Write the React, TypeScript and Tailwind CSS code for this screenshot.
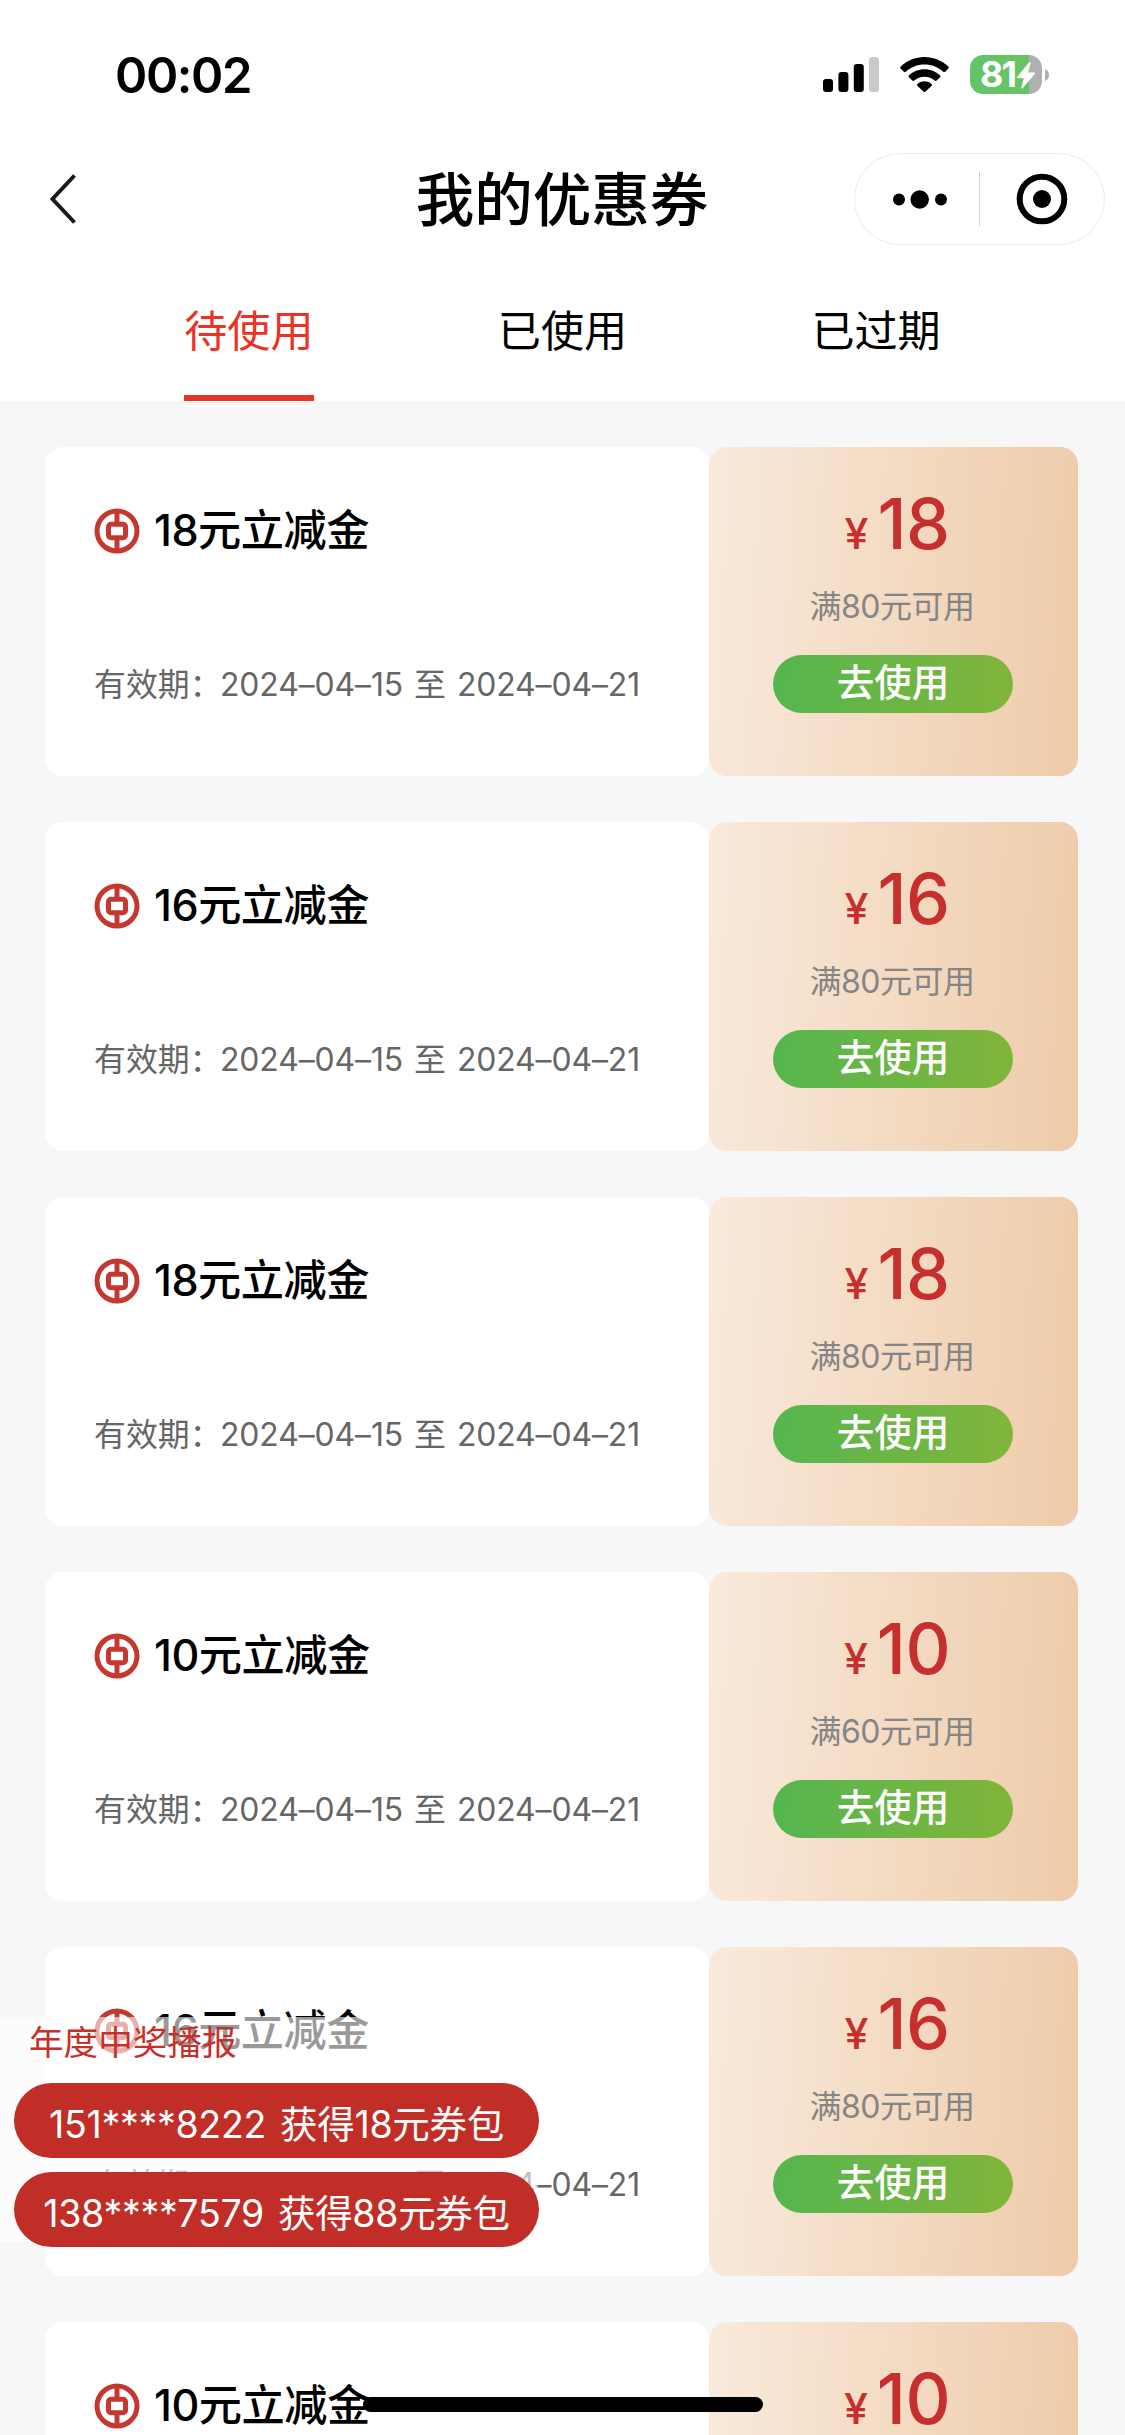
const coupons = [
  { amount: 18, min: 80 },
  { amount: 16, min: 80 },
  { amount: 18, min: 80 },
  { amount: 10, min: 60 },
  { amount: 16, min: 80 },
  { amount: 10, min: 60 },
];

const winners = [
  { phone: "151****8222", prize: "获得18元券包" },
  { phone: "138****7579", prize: "获得88元券包" },
];

function StatusBar() {
  return (
    <div className="flex h-[150px] items-start justify-between pl-[115px] pr-[76px]">
      <div className="mt-[46px] w-[160px] text-[49px] font-semibold leading-[60px] tracking-[-1.400px] text-black">00:02</div>
      <div className="mt-[55px] flex items-start">
        <svg className="mt-[2px]" width="56" height="35" viewBox="0 0 56 35">
          <rect x="0" y="22" width="10" height="13" rx="3" />
          <rect x="15.4" y="15" width="10" height="20" rx="3" />
          <rect x="30.8" y="7" width="10" height="28" rx="3" />
          <rect x="46" y="0" width="10" height="35" rx="3" fill="#c9c9c9" />
        </svg>
        <svg className="ml-[21px] mt-[2px]" width="49" height="35" viewBox="0 0 49 35">
          <path d="M24.5 0C15.3 0 6.900 3.600.7 9.500c-.6.600-.6 1.400-.1 2l3.200 3.300c.6.600 1.500.6 2.100 0C10.700 10.300 17.200 7.600 24.500 7.600s13.800 2.700 18.600 7.200c.6.600 1.500.6 2.100 0l3.200-3.300c.5-.6.5-1.400-.1-2C42.100 3.600 33.700 0 24.500 0z" />
          <path d="M24.500 12.200c-6 0-11.400 2.300-15.500 6-.6.600-.6 1.500 0 2.100l3.300 3.300c.5.500 1.400.500 2 0 2.700-2.400 6.300-3.800 10.200-3.800s7.500 1.400 10.200 3.800c.6.500 1.500.5 2 0l3.300-3.300c.6-.6.600-1.500 0-2.100-4.100-3.700-9.500-6-15.500-6z" />
          <path d="M24.500 24.300c-2.700 0-5.200 1-7 2.600-.6.600-.6 1.400 0 2l6 5.700c.6.600 1.400.600 2 0l6-5.700c.6-.6.600-1.400 0-2-1.800-1.600-4.300-2.600-7-2.600z" />
        </svg>
        <div className="relative ml-[21px] flex h-[39px] w-[72px] items-center rounded-[13px] bg-[linear-gradient(to_right,#65c466_59px,#b0b0b0_59px)] pl-[10px]">
          <span className="text-[36px] font-bold leading-[39px] tracking-[-2px] text-white">81</span>
          <svg className="absolute left-[46px] top-[7px]" width="20" height="27" viewBox="0 0 20 27">
            <path d="M13.200.3 1 15c-.4.500-.1 1.200.6 1.200h6.200L5.300 25.600c-.2.900.7 1.300 1.300.6L19 11.700c.4-.5.100-1.200-.6-1.200h-6.200L14.500 1c.2-.8-.7-1.300-1.300-.7z" fill="#fff" />
          </svg>
        </div>
        <svg className="ml-[3px] mt-[14px]" width="4" height="12" viewBox="0 0 4 12">
          <path d="M0 0c2.500 1 4 3.300 4 6s-1.500 5-4 6z" fill="#b0b0b0" />
        </svg>
      </div>
    </div>
  );
}

function NavBar() {
  return (
    <div className="flex h-[98px] items-center justify-between pl-[50px] pr-[20px]">
      <div className="w-[251px]">
        <svg width="27" height="50" viewBox="0 0 27 50" fill="none">
          <path d="M24.500 1.500 2.500 25l22 23.500" stroke="#1a1a1a" strokeWidth="4" />
        </svg>
      </div>
      <h1 className="ml-[-31px] mt-[1px] text-[58.500px] font-medium leading-[80px] text-black">我的优惠券</h1>
      <div className="flex h-[92px] w-[251px] items-center rounded-full border-[1.500px] border-[#ebebeb]">
        <svg className="ml-[37px]" width="56" height="20" viewBox="0 0 56 20">
          <circle cx="7" cy="10.500" r="6" />
          <circle cx="27.700" cy="10.500" r="9.200" />
          <circle cx="49" cy="10.500" r="6" />
        </svg>
        <div className="ml-[31px] h-[54px] w-px bg-[#d0d0d0]" />
        <svg className="ml-[36px]" width="52" height="52" viewBox="0 0 52 52">
          <circle cx="26" cy="26" r="22.300" fill="none" stroke="#000" strokeWidth="6" />
          <circle cx="26" cy="26" r="9" />
        </svg>
      </div>
    </div>
  );
}

function Tabs() {
  return (
    <div className="flex h-[153px] justify-evenly text-[43.100px] leading-[60px] text-black">
      <div className="h-full border-b-[6px] border-[#ea3323] pt-[53px] text-[#ea3323]">待使用</div>
      <div className="h-full pt-[53px]">已使用</div>
      <div className="h-full pt-[53px]">已过期</div>
    </div>
  );
}

function BankLogo() {
  return (
    <svg width="46" height="46" viewBox="0 0 46 46" fill="none" stroke="#c5382f">
      <circle cx="23" cy="23" r="20" strokeWidth="5" />
      <path d="M23 3v12M23 31v12" strokeWidth="5" />
      <rect x="14.500" y="16.300" width="17" height="13.400" rx="2.500" strokeWidth="5" />
    </svg>
  );
}

function Coupon({ amount, min }: { amount: number; min: number }) {
  return (
    <div className="flex h-[329px] shrink-0">
      <div className="w-[664px] rounded-[18px] bg-white pl-[49px] pt-[53px]">
        <div className="flex h-[60px] items-center">
          <div className="mt-[2px]">
            <BankLogo />
          </div>
          <div className="ml-[14px] text-[43.200px] font-medium leading-[60px] tracking-[-0.500px] text-black">
            {amount}元立减金
          </div>
        </div>
        <div className="mt-[100px] flex whitespace-nowrap text-[31.900px] leading-[50px] text-[#666]">
          <span className="w-[126px]">有效期：</span>
          <span className="flex gap-[11px] tracking-[-0.100px]">
            <span>2024–04–15</span>
            <span>至</span>
            <span>2024–04–21</span>
          </span>
        </div>
      </div>
      <div className="flex w-[369px] flex-col items-center rounded-[18px] bg-[linear-gradient(93deg,#f9eadc,#eecba9)] pt-[32px]">
        <div className="ml-[7px] flex h-[90px] items-baseline gap-[9px] font-medium leading-[90px] text-[#c62f2d]">
          <span className="text-[43px]">¥</span>
          <span className="text-[70px] tracking-[-0.500px]">{amount}</span>
        </div>
        <div className="mr-[3px] mt-[13px] text-[32px] leading-[50px] tracking-[-0.500px] text-[#858585]">满{min}元可用</div>
        <button className="mr-[1px] mt-[23px] h-[58px] w-[240px] rounded-full bg-[linear-gradient(93deg,#54b64f,#82b53a)] pb-[2px] text-[37.500px] font-medium leading-[56px] text-white">
          去使用
        </button>
      </div>
    </div>
  );
}

function WinnerBroadcast() {
  return (
    <div className="absolute left-0 top-[2017px] h-[225px] w-[538px] bg-white/60">
      <div className="h-[66px] pl-[29px] text-[34.600px] leading-[50px] text-[#c62f2a]">年度中奖播报</div>
      <div className="ml-[14px] flex w-[525px] flex-col gap-[14px]">
        {winners.map((w) => (
          <div
            key={w.phone}
            className="flex h-[75px] items-center justify-center gap-[14px] rounded-full bg-[#c12e27] pt-[9px] text-[37.500px] leading-[60px] tracking-[-0.300px] text-white"
          >
            <span>{w.phone}</span>
            <span>{w.prize}</span>
          </div>
        ))}
      </div>
    </div>
  );
}

export default function App() {
  return (
    <div className="relative flex h-[2435px] w-[1125px] flex-col overflow-hidden bg-[#f7f7f7] font-['Inter','Noto_Sans_CJK_SC',sans-serif]">
      <header className="shrink-0 bg-white">
        <StatusBar />
        <NavBar />
        <Tabs />
      </header>
      <main className="flex flex-col gap-[46px] pl-[45px] pt-[46px]">
        {coupons.map((c, i) => (
          <Coupon key={i} amount={c.amount} min={c.min} />
        ))}
      </main>
      <WinnerBroadcast />
      <div className="absolute left-[363px] top-[2397px] h-[15px] w-[400px] rounded-full bg-black" />
    </div>
  );
}
